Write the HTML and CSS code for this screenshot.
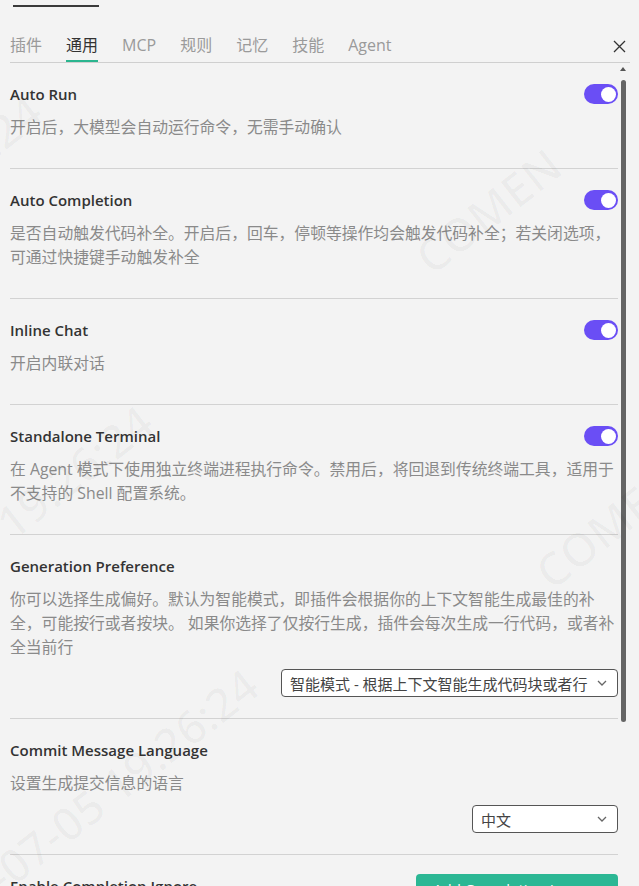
FILE: index.html
```html
<!DOCTYPE html>
<html lang="zh-CN">
<head>
    <meta charset="UTF-8">
    <meta name="viewport" content="width=device-width, initial-scale=1.0">
    <title>设置 - 通用</title>
    <link rel="stylesheet" href="styles.css">
</head>
<body>
    <div class="panel">
        <!-- Parent tab strip, mostly scrolled off -->
        <div class="top-strip"><span class="top-line"></span></div>

        <!-- Tabs -->
        <div class="tabs">
            <nav class="tab-list">
                <span class="tab">插件</span>
                <span class="tab active">通用</span>
                <span class="tab">MCP</span>
                <span class="tab">规则</span>
                <span class="tab">记忆</span>
                <span class="tab">技能</span>
                <span class="tab">Agent</span>
            </nav>
            <button class="close" aria-label="关闭">
                <svg width="13" height="13" viewBox="0 0 13 13">
                    <path d="M1 1 L12 12 M12 1 L1 12" stroke="#333" stroke-width="1.3" fill="none"/>
                </svg>
            </button>
        </div>

        <!-- Settings list -->
        <div class="body">
            <div class="settings">
                <section class="setting">
                    <div class="setting-head">
                        <h3>Auto Run</h3>
                        <span class="switch on"></span>
                    </div>
                    <p class="setting-desc">开启后，大模型会自动运行命令，无需手动确认</p>
                </section>

                <section class="setting">
                    <div class="setting-head">
                        <h3>Auto Completion</h3>
                        <span class="switch on"></span>
                    </div>
                    <p class="setting-desc">是否自动触发代码补全。开启后，回车，停顿等操作均会触发代码补全；若关闭选项，可通过快捷键手动触发补全</p>
                </section>

                <section class="setting">
                    <div class="setting-head">
                        <h3>Inline Chat</h3>
                        <span class="switch on"></span>
                    </div>
                    <p class="setting-desc">开启内联对话</p>
                </section>

                <section class="setting">
                    <div class="setting-head">
                        <h3>Standalone Terminal</h3>
                        <span class="switch on"></span>
                    </div>
                    <p class="setting-desc">在 Agent 模式下使用独立终端进程执行命令。禁用后，将回退到传统终端工具，适用于不支持的 Shell 配置系统。</p>
                </section>

                <section class="setting with-select">
                    <div class="setting-head">
                        <h3>Generation Preference</h3>
                    </div>
                    <p class="setting-desc">你可以选择生成偏好。默认为智能模式，即插件会根据你的上下文智能生成最佳的补全，可能按行或者按块。 如果你选择了仅按行生成，插件会每次生成一行代码，或者补全当前行</p>
                    <div class="select-row">
                        <div class="select select-wide">
                            <span>智能模式 - 根据上下文智能生成代码块或者行</span>
                            <svg class="chevron" width="10" height="6" viewBox="0 0 10 6">
                                <path d="M1 1 L5 5 L9 1" stroke="#666" stroke-width="1.3" fill="none"/>
                            </svg>
                        </div>
                    </div>
                </section>

                <section class="setting with-select">
                    <div class="setting-head">
                        <h3>Commit Message Language</h3>
                    </div>
                    <p class="setting-desc">设置生成提交信息的语言</p>
                    <div class="select-row">
                        <div class="select select-narrow">
                            <span>中文</span>
                            <svg class="chevron" width="10" height="6" viewBox="0 0 10 6">
                                <path d="M1 1 L5 5 L9 1" stroke="#666" stroke-width="1.3" fill="none"/>
                            </svg>
                        </div>
                    </div>
                </section>

                <section class="setting">
                    <div class="setting-head">
                        <h3>Enable Completion Ignore</h3>
                        <button class="btn-green">Add Completion Ignore</button>
                    </div>
                </section>
            </div>

            <!-- Scrollbar -->
            <div class="scrollbar">
                <span class="scroll-arrow"></span>
                <span class="scroll-thumb"></span>
            </div>
        </div>

        <!-- Watermark -->
        <div class="watermark">
            <span class="wm wm-1">19:26:24</span>
            <span class="wm wm-2">COMEN</span>
            <span class="wm wm-3">05 19:26:24</span>
            <span class="wm wm-4">COMEN</span>
            <span class="wm wm-5">6-07-05 19:26:24</span>
        </div>
    </div>
</body>
</html>
```

FILE: styles.css
```css
/* General Styles */
html, body {
    height: 100%;
    margin: 0;
    padding: 0;
}
body {
    background-color: #f3f3f3;
    font-family: "Open Sans", "Noto Sans CJK SC", sans-serif;
    color: #333;
    overflow: hidden;
}
.panel {
    position: relative;
    height: 100%;
    overflow: hidden;
}

/* Top strip */
.top-strip {
    padding-top: 5px;
    height: 2px;
}
.top-line {
    display: block;
    width: 86px;
    height: 1.5px;
    margin-left: 13px;
    background-color: #3a3a3a;
}

/* Tabs */
.tabs {
    display: flex;
    justify-content: space-between;
    align-items: flex-end;
    margin: 0 9px 0 10px;
    border-bottom: 1px solid #cfcfcf;
}
.tab-list {
    display: flex;
    gap: 24px;
}
.tab {
    padding: 27px 0 4px;
    font-size: 16px;
    line-height: 22px;
    color: #9a9a9a;
    border-bottom: 2px solid transparent;
}
.tab.active {
    color: #333;
    border-bottom-color: #2bb58f;
}
.close {
    display: flex;
    padding: 0;
    margin: 0 4px 9px 0;
    background: none;
    border: none;
    cursor: pointer;
}

/* Body */
.body {
    display: flex;
}
.settings {
    flex: 1;
    padding-left: 10px;
}
.setting {
    padding: 20px 0 29px;
    border-bottom: 1px solid #d2d2d2;
}
.setting.with-select {
    padding-bottom: 21px;
}
.setting-head {
    display: flex;
    justify-content: space-between;
    align-items: center;
    height: 22px;
}
.setting-head h3 {
    margin: 0;
    font-size: 15px;
    font-weight: 600;
    line-height: 22px;
    color: #333;
}
.setting-desc {
    margin: 10px 0 0;
    font-size: 15.8px;
    line-height: 24px;
    color: #8a8a8a;
}

/* Switch */
.switch {
    position: relative;
    width: 34px;
    height: 20px;
    border-radius: 10px;
    background-color: #ccc;
}
.switch::after {
    content: "";
    position: absolute;
    top: 2.5px;
    left: 2px;
    width: 15px;
    height: 15px;
    border-radius: 50%;
    background-color: #fff;
}
.switch.on {
    background-color: #6a4ef5;
}
.switch.on::after {
    left: 17px;
}

/* Select */
.select-row {
    display: flex;
    justify-content: flex-end;
    margin-top: 10px;
}
.select {
    box-sizing: border-box;
    display: flex;
    justify-content: space-between;
    align-items: center;
    height: 28px;
    padding: 0 10px 0 8px;
    background-color: #fff;
    border: 1px solid #555;
    border-radius: 4px;
    font-size: 15px;
    color: #444;
}
.select-wide {
    width: 337px;
}
.select-narrow {
    width: 146px;
}
.chevron {
    flex-shrink: 0;
}

/* Green button */
.btn-green {
    width: 202px;
    height: 30px;
    margin-top: 6px;
    padding: 0 17px;
    text-align: left;
    background-color: #2bb794;
    color: #fff;
    border: none;
    border-radius: 4px;
    font-family: inherit;
    font-size: 15px;
}

/* Scrollbar */
.scrollbar {
    width: 12px;
    margin-right: 9px;
    display: flex;
    flex-direction: column;
}
.scroll-arrow {
    width: 0;
    height: 0;
    margin: 4px 0 0 2px;
    border-left: 3.5px solid transparent;
    border-right: 3.5px solid transparent;
    border-bottom: 4px solid #555;
}
.scroll-thumb {
    width: 5px;
    height: 642px;
    margin: 9px 0 0 3px;
    border-radius: 3px;
    background-color: #646464;
}

/* Watermark */
.watermark {
    position: absolute;
    inset: 0;
    pointer-events: none;
}
.wm {
    position: absolute;
    font-size: 46px;
    font-weight: 600;
    white-space: nowrap;
    color: rgba(0, 0, 0, 0.028);
    transform: rotate(-38deg);
    transform-origin: left bottom;
}
.wm-1 { left: -90px; top: 180px; }
.wm-2 { left: 440px; top: 225px; }
.wm-3 { left: -30px; top: 530px; }
.wm-4 { left: 560px; top: 540px; }
.wm-5 { left: -10px; top: 860px; }
```
